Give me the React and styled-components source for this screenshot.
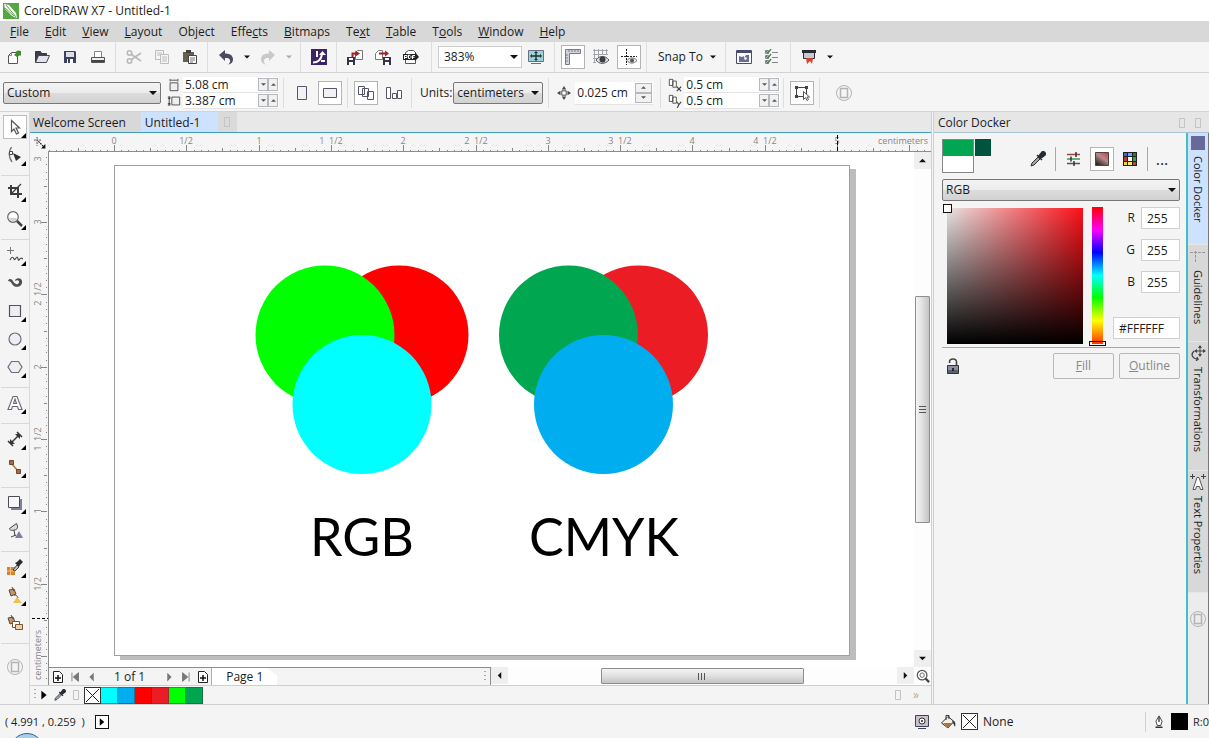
import React from 'react';
import styled, { createGlobalStyle, css } from 'styled-components';

/* icons, all on a 16px grid */

const icons = {
  newDoc: (
    <>
      <path d='M2.500 6.500l3-3h6v11h-9z' fill='#fff' stroke='#555' />
      <path d='M2.500 6.500h3v-3' fill='none' stroke='#888' />
      <path d='M8 6l3-3-1-1h5v5l-1-1-3 2z' fill='#3f8f2c' />
      <circle cx='12.500' cy='4' r='2.500' fill='#3f8f2c' />
    </>
  ),
  open: (
    <>
      <path d='M1.500 13.500v-11h5l1 2h5v3' fill='#3b3d4c' stroke='#333544' />
      <path d='M1.500 13.500l3-7h11l-3 7z' fill='#e3e4ea' stroke='#444657' />
    </>
  ),
  save: (
    <>
      <path d='M2 2h11l1 1v11H2z' fill='#3d3f61' />
      <path d='M4 3h8v5H4z' fill='#dcdde8' />
      <path d='M5 10h6v4H5z' fill='#fff' />
      <path d='M6 10h2v4H6z' fill='#3d3f61' />
    </>
  ),
  print: (
    <>
      <path d='M4.500 8.500v-6h7v6' fill='#fff' stroke='#888' />
      <path d='M1.500 8.500h13v5h-13z' fill='#eee' stroke='#555' />
      <path d='M2 11h12v2H2z' fill='#444' />
    </>
  ),
  cut: (
    <g fill='none' stroke='#b9b9b9' strokeWidth='1.600'>
      <circle cx='3.500' cy='4' r='2.200' />
      <circle cx='3.500' cy='12' r='2.200' />
      <path d='M5.500 5.500L15 12M5.500 10.500L15 4' />
    </g>
  ),
  copy: (
    <g fill='#f6f6f6' stroke='#bcbcbc'>
      <path d='M1.500 1.500h8v9h-8zM3 4h5M3 6h5' />
      <path d='M6.500 5.500h8v9h-8zM8 8h5M8 10h5M8 12h5' />
    </g>
  ),
  paste: (
    <>
      <path d='M1 3h11v10H1z' fill='#675f50' />
      <path d='M4 1h5v3H4z' fill='#45413a' />
      <path d='M6.500 6.500h8v8h-8z' fill='#fff' stroke='#454545' />
      <path d='M8 9h5M8 11h5M8 13h3' stroke='#777' />
    </>
  ),
  undo: <path d='M1 6l6-5v3.500c5 0 8 2 8 6 0 3-2 4.500-5 5 2-1.500 2.500-3 2-4.500-.5-1.600-2-2.200-5-2V12z' fill='#4b4a60' />,
  redo: <path d='M15 6L9 1v3.500c-5 0-8 2-8 6 0 3 2 4.500 5 5-2-1.500-2.500-3-2-4.500.5-1.600 2-2.200 5-2V12z' fill='#c9c9c9' />,
  connect: (
    <>
      <path d='M0 0h16v16H0z' fill='#3c2366' />
      <path d='M2 13.500c6 0 8-3 9-8' fill='none' stroke='#fff' strokeWidth='2' />
      <path d='M8 6l3.500-4L15 6zM5 2h2v6H5zM10 11h4v2h-4z' fill='#fff' />
    </>
  ),
  importFile: (
    <>
      <path d='M8.500 3.500l2-2h5v9h-7z' fill='#fff' stroke='#777' />
      <path d='M4.500 8V3.500h4V1.500L13 4.500l-4.500 3v-2H6.500V8z' fill='#a32126' />
      <path d='M0 8h8v8H0z' fill='#33344f' />
      <path d='M2 9h4v2H2zM2 13h4v3H2z' fill='#fff' />
    </>
  ),
  exportFile: (
    <>
      <path d='M.5 4.500l3-3h4v9h-7z' fill='#fff' stroke='#777' />
      <path d='M4 3.500h6V1.500l4 3-4 3V5.500H4z' fill='#a32126' />
      <path d='M8 8h8v8H8z' fill='#33344f' />
      <path d='M10 9h4v2h-4zM10 13h4v3h-4z' fill='#fff' />
    </>
  ),
  pdf: (
    <>
      <path d='M2.500 14.500v-11l3-2h5l2 2v11z' fill='#fff' stroke='#555' />
      <path d='M0 5h12V3l4 5-4 4v-1H0z' fill='#222' />
      <path d='M1.500 10V6.500H4v2H1.500M5.500 6v3.500H7L8 8.500v-1L7 6.500zM9.500 10V6.500H12M9.500 8.200h2' fill='none' stroke='#fff' />
    </>
  ),
  fullScreen: (
    <>
      <path d='M.5 1.500h15v11H.5z' fill='#9ed3d6' stroke='#6a6d86' />
      <path d='M3 14.500h10' stroke='#6a6d86' />
      <path d='M8 3v8M3 7h10' stroke='#17333a' strokeWidth='1.400' />
      <path d='M8 2l2 2H6zM8 12l-2-2h4zM2 7l2-2v4zM14 7l-2 2V5z' fill='#17333a' />
    </>
  ),
  rulers: (
    <>
      <path d='M.5 .5h15v4h-11v11h-4z' fill='#d3d4de' stroke='#777a8c' />
      <path d='M4 1v2M7 1v2M10 1v2M13 1v2M1 6h2M1 9h2M1 12h2' stroke='#777a8c' />
    </>
  ),
  grid: (
    <>
      <path d='M0 1.500h15M0 5.500h15M0 9.500h6M0 13.500h3M1.500 0v14M5.500 0v10M9.500 0v6M13.500 0v6' stroke='#a4a4ac' />
      <path d='M3 11c3-4.500 9-5 13 0-4 4.500-10 4.500-13 0z' fill='#dedede' stroke='#555' />
      <circle cx='9.500' cy='10.500' r='3' fill='#3b3b44' />
    </>
  ),
  guides: (
    <>
      <path d='M5.500 0v16M0 7.500h16' stroke='#222' strokeDasharray='2 1' />
      <path d='M6 11.500c2.500-3.500 7-3.500 10 0-3 3.500-7.500 3.500-10 0z' fill='#e8e8e8' stroke='#777' />
      <circle cx='11' cy='11.500' r='2' fill='#555' />
    </>
  ),
  launcher: (
    <>
      <path d='M.5 1.500h15v13H.5z' fill='#fff' stroke='#4a4b70' />
      <path d='M1 2h14v2H1z' fill='#4a4b70' />
      <path d='M3 13V7l3 1 2-1v2l2-3h3v7z' fill='#6a6b9a' />
      <circle cx='9.500' cy='9.500' r='1.300' fill='#fff' />
    </>
  ),
  options: (
    <g fill='none'>
      <path d='M1.500 1.500h3v3h-3zM1.500 6.500h3v3h-3zM1.500 11.500h3v3h-3z' stroke='#888' />
      <path d='M2 2l2 2 3-4M2 7l2 2 3-4M2 12l2 2 3-4' stroke='#52785a' strokeWidth='1.300' />
      <path d='M8 3.500h6M8 8.500h6M8 13.500h6' stroke='#888' />
    </g>
  ),
  welcome: (
    <>
      <path d='M2.500 1.500h11v8h-11z' fill='#c3cad6' stroke='#2a2b35' />
      <path d='M1 1h14v3H1z' fill='#2a2b35' />
      <path d='M5 9h7l-1 6-2-3-3 3z' fill='#d2422c' />
    </>
  ),
  pageWidth: (
    <>
      <path d='M3.500 5.500h9v9h-9z' fill='#eee' stroke='#444' />
      <path d='M3.500 1v3M12.500 1v3M4 2.500h8' stroke='#444' />
    </>
  ),
  pageHeight: (
    <>
      <path d='M5.500 3.500h9v9h-9z' fill='#eee' stroke='#444' />
      <path d='M2.500 3v10M1 3.500h3M1 12.500h3M1 5h3M1 11h3' stroke='#333' />
    </>
  ),
  portrait: <path d='M3.500 1.500h9v13h-9z' fill='#f2f2f4' stroke='#55566a' />,
  landscape: <path d='M1.500 3.500h13v9h-13z' fill='#f2f2f4' stroke='#55566a' />,
  allPages: <path d='M.5 1.500h6v8h-6zM4.500 3.500h6v8h-6zM9.500 6.500h6v8h-6z' fill='#fff' stroke='#55566a' />,
  currentPage: <path d='M.5 2.500h4v11h-4zM6.500 8.500h4v5h-4zM11.500 5.500h4v8h-4z' fill='#fff' stroke='#55566a' />,
  nudge: (
    <>
      <path d='M5.500 5.500h5v5h-5z' fill='#fff' stroke='#333' />
      <path d='M8 0l2.500 4h-5zM8 16l-2.500-4h5zM0 8l4-2.500v5zM16 8l-4 2.500v-5z' fill='#444' />
    </>
  ),
  dupX: (
    <g fill='none' stroke='#444'>
      <path d='M1.500 1.500h4v7h-4zM5.500 3.500h4v7h-4z' fill='#fff' />
      <path d='M10 10l5 5M15 10l-5 5' strokeWidth='1.300' />
    </g>
  ),
  dupY: (
    <g fill='none' stroke='#444'>
      <path d='M1.500 1.500h4v7h-4zM5.500 3.500h4v7h-4z' fill='#fff' />
      <path d='M10 9l2.500 3L15 9M12.500 12l-2 4' strokeWidth='1.300' />
    </g>
  ),
  treatAs: (
    <>
      <path d='M2.500 2.500h10v9h-10z' fill='none' stroke='#444' />
      <path d='M1 1h3v3H1zM11 1h3v3h-3zM1 10h3v3H1z' fill='#444' />
      <path d='M9.500 6.500v8l2-2 1.500 3 1.500-1-1.500-2.500h2.500z' fill='#fff' stroke='#555' />
    </>
  ),
  customize: (
    <g fill='none' stroke='#b3b3b3'>
      <circle cx='8' cy='8' r='7.500' />
      <path d='M4.500 3.500h7v9h-7z' strokeWidth='1.500' />
    </g>
  ),
  pick: <path d='M4.500 1.500v11l2.500-2.500 2.500 5 2-1-2.500-5h3.500z' fill='#fff' stroke='#555' strokeWidth='1.200' />,
  shape: (
    <>
      <path d='M4.500 0C1 5 2 11 5 15' fill='none' stroke='#777' strokeWidth='1.400' />
      <path d='M2.500 4.500h3v3h-3z' fill='#fff' stroke='#444' />
      <path d='M6 6l8 4-5 4z' fill='#2f2f33' />
    </>
  ),
  crop: (
    <g fill='none' stroke='#3c3c40' strokeWidth='2'>
      <path d='M4 2v9h11M1 5h10v10' />
      <path d='M5 10L14 1' strokeWidth='1.200' />
    </g>
  ),
  zoom: (
    <>
      <circle cx='6' cy='6' r='5.300' fill='#fff' stroke='#666' strokeWidth='1.200' />
      <path d='M2 7h8c-1 4-7 4-8 0z' fill='#cdd0d8' />
      <path d='M10 10l5 5' stroke='#444' strokeWidth='2.500' />
    </>
  ),
  freehand: (
    <g fill='none' stroke='#444'>
      <path d='M3.500 0v7M0 3.500h7' stroke='#777' />
      <path d='M3 13c2-4 3-3 4-1s2-2 3-2 1 4 2 3 2-3 4-1' strokeWidth='1.200' />
    </g>
  ),
  artistic: <path d='M1 6c1-3 4-2 5 0 2 4 6 4 6 1 0-2-2-2-4-1 0-3 6-4 7 0 1 6-7 8-10 3C4 7 3 6 1 6z' fill='#4e4e52' />,
  rect: <path d='M2.500 2.500h11v11h-11z' fill='#ededf3' stroke='#55565c' strokeWidth='1.200' />,
  ellipse: <circle cx='8' cy='8' r='6' fill='#ededf3' stroke='#6d6e75' strokeWidth='1.200' />,
  polygon: <path d='M4.500 2.500h7L15 8l-3.500 5.500h-7L1 8z' fill='#ededf3' stroke='#6d6e75' strokeWidth='1.200' />,
  text: <path d='M1 14.500L6 1.500h4l5 13h-3.500l-1-3h-5l-1 3zM6.500 8.500h3L8 4z' fill='#fff' fillRule='evenodd' stroke='#666973' strokeWidth='1.100' />,
  dimension: (
    <>
      <path d='M4 12l8-8' stroke='#333' strokeWidth='1.500' />
      <path d='M1 10l5 5M10 1l5 5' stroke='#333' strokeWidth='1.500' />
      <path d='M3 13V8l5 5zM13 3v5L8 3z' fill='#333' />
    </>
  ),
  connector: (
    <>
      <path d='M4 4l7 8' fill='none' stroke='#b07b36' strokeWidth='1.500' />
      <path d='M2.500 1.500h4v4h-4zM9.500 10.500h4v4h-4z' fill='#a56b48' stroke='#6d4632' />
    </>
  ),
  shadow: (
    <>
      <path d='M4 4h11v11H4z' fill='#7e80a0' />
      <path d='M1.500 1.500h11v11h-11z' fill='#f7f7fa' stroke='#4b4c58' />
    </>
  ),
  transparency: (
    <>
      <path d='M2.500 5.500l7-5c2 4 1 6-2 6.500S3.500 8 2.500 5.500zM7 7l1 6M4 14l5-2' fill='#ddd' stroke='#444' />
      <path d='M8 15l4-7 4 7z' fill='#7c7fa0' />
    </>
  ),
  colorDropper: (
    <>
      <path d='M0 8h8v8H0z' fill='#d9822b' />
      <path d='M3.500 8v8M0 12h8' stroke='#f4c27c' />
      <path d='M6 11l4-5 2 2-4 4z' fill='#bbb' stroke='#444' />
      <path d='M8 4l2-1 3-3 3 3-3 3-1 2z' fill='#2b2b30' />
    </>
  ),
  interactiveFill: (
    <>
      <path d='M2 3l5-1 2 5-5 2zM5 0l2 4' fill='#c79368' stroke='#5b4a3d' />
      <path d='M7 8c3 0 3 1 4 3' fill='none' stroke='#5b4a3d' />
      <path d='M6 16l4-6 5 6z' fill='#f0c14c' />
    </>
  ),
  smartFill: (
    <>
      <path d='M1 3l5-1 2 5-5 2zM4 0l2 4' fill='#c79368' stroke='#5b4a3d' />
      <path d='M5.500 6.500h7v6h-7z' fill='#fff' stroke='#7a5638' />
      <path d='M8.500 9.500h7v5h-7z' fill='#eed0a8' stroke='#7a5638' />
    </>
  ),
  dropper: (
    <>
      <path d='M1 15l1-3 6-6 2 2-6 6z' fill='#9ba3a8' stroke='#333' />
      <path d='M7 4l5 5M9 5l3-4c2-1 4 1 3 3l-4 3z' fill='#262c33' stroke='#262c33' strokeWidth='1.500' />
    </>
  ),
  sliders: (
    <g strokeWidth='1.500'>
      <path d='M1 3.500h13' stroke='#a54044' />
      <path d='M1 8h13' stroke='#3d9a55' />
      <path d='M1 12.500h13' stroke='#4c5570' />
      <path d='M10 1v5M5 5.500v5M8 10v5' stroke='#333' />
    </g>
  ),
  viewer: (
    <>
      <defs>
        <linearGradient id='viewer' x1='1' y1='0' x2='.3' y2='1'>
          <stop offset='0' stopColor='#d9343c' />
          <stop offset='.5' stopColor='#b98a8a' />
          <stop offset='1' stopColor='#2c2c2c' />
        </linearGradient>
      </defs>
      <path d='M1.500 1.500h13v13h-13z' fill='url(#viewer)' stroke='#4d4148' />
    </>
  ),
  palettes: (
    <>
      <path d='M1 1h14v14H1z' fill='#222' />
      <path d='M2 2h3v3H2z' fill='#4466c8' />
      <path d='M6 2h4v3H6z' fill='#73a0e8' />
      <path d='M11 2h3v3h-3z' fill='#2b7b35' />
      <path d='M2 6h3v4H2z' fill='#c03434' />
      <path d='M6 6h4v4H6z' fill='#fff' />
      <path d='M11 6h3v4h-3z' fill='#3aa23c' />
      <path d='M2 11h3v3H2z' fill='#eed640' />
      <path d='M6 11h4v3H6z' fill='#f4e873' />
      <path d='M11 11h3v3h-3z' fill='#b84432' />
    </>
  ),
  lock: (
    <>
      <path d='M4.500 5V4c0-4 7-4 7 0v4' fill='none' stroke='#444' strokeWidth='1.600' />
      <path d='M2.500 7.500h11v8h-11z' fill='#8b8da0' stroke='#333' />
      <path d='M3 12h10v3H3z' fill='#5d5f72' />
      <path d='M8 10v3' stroke='#111' strokeWidth='1.600' />
    </>
  ),
  origin: (
    <>
      <path d='M0 3.500h9M3.500 0v10' stroke='#333' strokeDasharray='2 1' />
      <path d='M5 5l6 6' stroke='#111' strokeDasharray='2 1' strokeWidth='1.300' />
      <path d='M13 8v5H8z' fill='#111' />
    </>
  ),
  addPage: (
    <>
      <path d='M3.500 2.500h6l3 3v8h-9z' fill='#fff' stroke='#222' />
      <path d='M8 6v6M5 9h6' stroke='#111' strokeWidth='1.500' />
    </>
  ),
  first: <path d='M4.500 3v10M12 3v10L6 8z' fill='#777' stroke='#777' />,
  prev: <path d='M10 3v10L5 8z' fill='#777' />,
  next: <path d='M6 3v10l5-5z' fill='#777' />,
  last: <path d='M11.500 3v10M4 3v10l6-5z' fill='#777' stroke='#777' />,
  play: <path d='M5 3v10l6-5z' fill='#000' />,
  blank: <path d='M5.500 3.500h5v9h-5z' fill='none' stroke='#c3c3c3' />,
  navigator: (
    <>
      <circle cx='7' cy='7' r='5.500' fill='#fff' stroke='#555' strokeWidth='1.400' />
      <circle cx='7' cy='7' r='2.500' fill='none' stroke='#555' />
      <path d='M11 11l4 4' stroke='#444' strokeWidth='2.500' />
    </>
  ),
  proof: (
    <>
      <path d='M1.500 1.500h13v11h-13z' fill='#c9c0c9' stroke='#3d4458' />
      <circle cx='8' cy='7' r='3' fill='#fff' stroke='#333' />
      <circle cx='8' cy='7' r='1' fill='#222' />
      <path d='M4 14.500h8' stroke='#3d4458' />
    </>
  ),
  bucket: (
    <>
      <path d='M1.500 9L8 2.500l6 5L8 14z' fill='#f3efe8' stroke='#333' />
      <path d='M3 9h10l-5 5z' fill='#b0703b' />
      <path d='M6 6V1.500h3V5' fill='none' stroke='#333' />
      <path d='M12 7c3 0 4 2 3 6l-2-4z' fill='#333' />
    </>
  ),
  nib: (
    <>
      <path d='M8 1l3.500 6-1.500 5H6L4.500 7z' fill='#fff' stroke='#333' />
      <path d='M8 2v6M4 14h8' stroke='#333' strokeWidth='1.500' />
    </>
  ),
  guideTab: <path d='M0 4.500h16M5.500 3v12' fill='none' stroke='#999' strokeDasharray='3 1' />,
  transform: (
    <>
      <path d='M10 1v10M5 6h10' stroke='#444' />
      <path d='M10 0l2 3H8zM10 12l-2-3h4zM4 6l3-2v4zM16 6l-3 2V4z' fill='#444' />
      <path d='M4 6c-4 4-1 8 4 8l-1-2M8 14l-2 2' fill='none' stroke='#444' strokeWidth='1.300' />
    </>
  ),
  textTab: (
    <>
      <path d='M3 15.500L7 3.500h2l4 12h-2.500l-1-3h-3l-1 3z' fill='#fff' stroke='#555' />
      <path d='M0 2.500h5M11 2.500h5M2.500 0v5M13.500 0v5' stroke='#444' />
    </>
  ),
};

const Icon = ({ name, size = 16 }) => (
  <svg width={size} height={size} viewBox='0 0 16 16' aria-hidden='true'>
    {icons[name]}
  </svg>
);

const Caret = ({ dir = 'down', color = '#111', size = 7 }) => {
  const d = {
    down: 'M0 2h8L4 6z',
    up: 'M0 6h8L4 2z',
    left: 'M6 0v8L2 4z',
    right: 'M2 0v8l4-4z',
  }[dir];
  return (
    <svg width={size} height={size} viewBox='0 0 8 8' aria-hidden='true'>
      <path d={d} fill={color} />
    </svg>
  );
};

const menus = [
  ['', 'F', 'ile'],
  ['', 'E', 'dit'],
  ['', 'V', 'iew'],
  ['', 'L', 'ayout'],
  ['Ob', 'j', 'ect'],
  ['Effe', 'c', 'ts'],
  ['', 'B', 'itmaps'],
  ['Te', 'x', 't'],
  ['', 'T', 'able'],
  ['T', 'o', 'ols'],
  ['', 'W', 'indow'],
  ['', 'H', 'elp'],
];

const tools = [
  ['pick', 'shape'],
  ['crop', 'zoom'],
  ['freehand', 'artistic', 'rect', 'ellipse', 'polygon'],
  ['text'],
  ['dimension', 'connector'],
  ['shadow', 'transparency'],
  ['colorDropper', 'interactiveFill', 'smartFill'],
];

const noFlyout = ['artistic', 'transparency', 'smartFill'];

const palette = ['#00ffff', '#00adef', '#ff0000', '#ec1c24', '#00ff00', '#00a64f'];

const dockers = [
  { label: 'Color Docker', height: 112, active: true },
  { label: 'Guidelines', height: 97, icon: 'guideTab' },
  { label: 'Transformations', height: 129, icon: 'transform' },
  { label: 'Text Properties', height: 122, icon: 'textTab' },
];

// length of one ruler unit at the current zoom level
const UNIT = 144.6;

const ticks = (from, to) => {
  const list = [];
  for (let i = from; i <= to; i++) {
    list.push({ at: Math.round((i * UNIT) / 20), size: i % 10 === 0 ? 6 : i % 5 === 0 ? 3 : 1 });
  }
  return list;
};

const halves = [0, 0.5, 1, 1.5, 2, 2.5, 3, 3.5, 4, 4.5, 5];

const rulerLabel = (n) => {
  const whole = Math.floor(n);
  if (n === whole) return String(n);
  return whole ? `${whole}\u00a0\u00a01/2` : '1/2';
};

function HorizontalRuler() {
  const zero = 66;
  return (
    <RulerSvg>
      {ticks(-9, 260).map((t) => (
        <rect key={t.at} x={zero + t.at} y={17 - t.size} width='1' height={t.size} />
      ))}
      {halves.map((n) => (
        <text key={n} x={zero + Math.round(n * UNIT)} y='10' textAnchor='middle'>
          {rulerLabel(n)}
        </text>
      ))}
      <text x='100%' dx='-3' y='10' textAnchor='end'>
        centimeters
      </text>
      <path d='M789.500 1v16' stroke='#000' strokeDasharray='4 2' />
    </RulerSvg>
  );
}

function VerticalRuler() {
  const zero = 505;
  return (
    <RulerSvg>
      {ticks(-3, 69).map((t) => (
        <rect key={t.at} x={17 - t.size} y={zero - t.at} width={t.size} height='1' />
      ))}
      {halves.slice(1, 7).map((n) => (
        <text key={n} transform={`translate(11 ${zero - Math.round(n * UNIT)}) rotate(-90)`} textAnchor='middle'>
          {rulerLabel(n)}
        </text>
      ))}
      <text transform='translate(11 8) rotate(-90)' textAnchor='middle'>
        3
      </text>
      <text transform='translate(11 504) rotate(-90)' textAnchor='middle'>
        centimeters
      </text>
      <path d='M2 467.500h16' stroke='#000' strokeDasharray='3 2' />
    </RulerSvg>
  );
}

const Dropdown = ({ label, options, plain, width, grow }) => (
  <SelectWrap $width={width} $grow={grow}>
    <Select aria-label={label} $plain={plain}>
      {options.map((o) => (
        <option key={o}>{o}</option>
      ))}
    </Select>
    <Caret size={8} />
  </SelectWrap>
);

const PairField = ({ icon, label, value }) => (
  <FieldRow>
    <Icon name={icon} size={14} />
    <FieldBox>
      <NumberInput aria-label={label} defaultValue={value} />
      <SpinButton aria-label={`Decrease ${label}`}>
        <Caret size={5} color='#555' />
      </SpinButton>
      <SpinButton aria-label={`Increase ${label}`}>
        <Caret dir='up' size={5} color='#555' />
      </SpinButton>
    </FieldBox>
  </FieldRow>
);

const Tool = ({ name, label, active, size }) => (
  <IconButton aria-label={label || name} $active={active}>
    <Icon name={name} size={size} />
  </IconButton>
);

function StandardBar() {
  return (
    <Toolbar $height={31}>
      <Tool name='newDoc' />
      <Tool name='open' />
      <Tool name='save' />
      <Tool name='print' />
      <Divider />
      <Tool name='cut' />
      <Tool name='copy' />
      <Tool name='paste' />
      <Divider />
      <Tool name='undo' />
      <CaretButton aria-label='Undo history'>
        <Caret size={6} />
      </CaretButton>
      <Tool name='redo' />
      <CaretButton aria-label='Redo history'>
        <Caret size={6} color='#aaa' />
      </CaretButton>
      <Divider $gap={4} />
      <Tool name='connect' />
      <Divider />
      <Tool name='importFile' />
      <Tool name='exportFile' />
      <Tool name='pdf' />
      <Divider $gap={6} />
      <Dropdown label='Zoom levels' options={['383%', '100%', '200%']} plain width={84} />
      <Tool name='fullScreen' />
      <Divider $gap={4} />
      <Tool name='rulers' active />
      <Tool name='grid' />
      <Tool name='guides' active />
      <Divider />
      <TextButton>
        Snap To <Caret size={6} />
      </TextButton>
      <Divider $gap={4} />
      <Tool name='launcher' />
      <Tool name='options' />
      <Divider $gap={4} />
      <Tool name='welcome' />
      <CaretButton aria-label='Welcome options'>
        <Caret size={6} />
      </CaretButton>
    </Toolbar>
  );
}

function PropertyBar() {
  return (
    <Toolbar $height={39} $inset>
      <Dropdown label='Page size' options={['Custom', 'Letter', 'A4']} width={158} />
      <FieldStack>
        <PairField icon='pageWidth' label='page width' value='5.08 cm' />
        <PairField icon='pageHeight' label='page height' value='3.387 cm' />
      </FieldStack>
      <Divider $gap={4} />
      <Tool name='portrait' />
      <Tool name='landscape' active />
      <Divider />
      <Tool name='allPages' active />
      <Tool name='currentPage' />
      <Divider />
      <Units>
        Units:
        <Dropdown label='Units' options={['centimeters', 'inches', 'pixels']} width={90} />
      </Units>
      <Divider />
      <Nudge>
        <Icon name='nudge' size={14} />
        <FieldBox>
          <NumberInput aria-label='Nudge distance' defaultValue='0.025 cm' $tall />
          <SpinColumn>
            <SpinButton aria-label='Increase nudge' $wide>
              <Caret dir='up' size={5} color='#555' />
            </SpinButton>
            <SpinButton aria-label='Decrease nudge' $wide>
              <Caret size={5} color='#555' />
            </SpinButton>
          </SpinColumn>
        </FieldBox>
      </Nudge>
      <Divider />
      <FieldStack $tight>
        <PairField icon='dupX' label='duplicate x' value='0.5 cm' />
        <PairField icon='dupY' label='duplicate y' value='0.5 cm' />
      </FieldStack>
      <Divider />
      <Tool name='treatAs' active />
      <Divider />
      <Spacer />
      <Tool name='customize' />
    </Toolbar>
  );
}

function Artwork() {
  return (
    <Page>
      <Figure>
        <svg width='214' height='210' viewBox='0 0 214 210'>
          <circle cx='144' cy='70' r='69.500' fill='#ff0000' />
          <circle cx='70' cy='70' r='69.500' fill='#00ff00' />
          <circle cx='107' cy='139.500' r='69.500' fill='#00ffff' />
        </svg>
        <figcaption>RGB</figcaption>
      </Figure>
      <Figure>
        <svg width='210' height='210' viewBox='0 0 210 210'>
          <circle cx='139.500' cy='70' r='69.500' fill='#ec1c24' />
          <circle cx='69.500' cy='70' r='69.500' fill='#00a650' />
          <circle cx='104.500' cy='139.500' r='69.500' fill='#00adef' />
        </svg>
        <figcaption>CMYK</figcaption>
      </Figure>
    </Page>
  );
}

function Workspace() {
  return (
    <Work>
      <DocTabs>
        <DocTab>Welcome Screen</DocTab>
        <DocTab $active>Untitled-1</DocTab>
        <NewTab aria-label='New document'>
          <Icon name='blank' />
        </NewTab>
      </DocTabs>
      <RulerRow>
        <Origin>
          <Icon name='origin' size={14} />
        </Origin>
        <HorizontalRuler />
      </RulerRow>
      <Middle>
        <SideRuler>
          <VerticalRuler />
        </SideRuler>
        <View>
          <CanvasRow>
            <Canvas>
              <Artwork />
            </Canvas>
            <ScrollBar $vertical>
              <ScrollArrow aria-label='Scroll up'>
                <Caret dir='up' />
              </ScrollArrow>
              <Track $vertical>
                <Thumb $vertical>
                  <Grip $vertical />
                </Thumb>
              </Track>
              <ScrollArrow aria-label='Scroll down'>
                <Caret />
              </ScrollArrow>
            </ScrollBar>
          </CanvasRow>
          <NavRow>
            <PageNav>
              <NavButton aria-label='Add page before'>
                <Icon name='addPage' />
              </NavButton>
              <NavButton aria-label='First page'>
                <Icon name='first' size={14} />
              </NavButton>
              <NavButton aria-label='Previous page'>
                <Icon name='prev' size={14} />
              </NavButton>
              <PageCount>1 of 1</PageCount>
              <NavButton aria-label='Next page'>
                <Icon name='next' size={14} />
              </NavButton>
              <NavButton aria-label='Last page'>
                <Icon name='last' size={14} />
              </NavButton>
              <NavButton aria-label='Add page after'>
                <Icon name='addPage' />
              </NavButton>
              <PageTab>Page 1</PageTab>
              <Handle />
            </PageNav>
            <ScrollBar>
              <ScrollArrow aria-label='Scroll left'>
                <Caret dir='left' />
              </ScrollArrow>
              <Track>
                <Thumb>
                  <Grip />
                </Thumb>
              </Track>
              <ScrollArrow aria-label='Scroll right'>
                <Caret dir='right' />
              </ScrollArrow>
            </ScrollBar>
            <NavButton aria-label='Navigator'>
              <Icon name='navigator' size={14} />
            </NavButton>
          </NavRow>
        </View>
      </Middle>
      <PaletteRow>
        <Handle />
        <NavButton aria-label='Palette menu'>
          <Icon name='play' size={14} />
        </NavButton>
        <NavButton aria-label='Pick color'>
          <Icon name='dropper' size={12} />
        </NavButton>
        <NavButton aria-label='Scroll palette'>
          <Icon name='blank' />
        </NavButton>
        <NoColor aria-label='No color'>
          <CrossIcon />
        </NoColor>
        {palette.map((c) => (
          <Swatch key={c} aria-label={c} $color={c} />
        ))}
        <Spacer />
        <NavButton aria-label='More colors'>
          <Icon name='blank' />
        </NavButton>
        <More aria-label='Expand palette'>»</More>
      </PaletteRow>
    </Work>
  );
}

const CrossIcon = () => (
  <svg width='15' height='15' viewBox='0 0 15 15' aria-hidden='true'>
    <path d='M1 1l13 13M14 1L1 14' stroke='#222' />
  </svg>
);

function ColorDocker() {
  return (
    <Docker>
      <DockerHeader>
        Color Docker
        <Spacer />
        <Icon name='blank' />
        <Icon name='blank' />
      </DockerHeader>
      <DockerMain>
        <DockerBody>
          <DockerTools>
            <Reference>
              <i />
              <b />
            </Reference>
            <Complement />
            <Spacer />
            <Tool name='dropper' label='Color eyedropper' />
            <Divider $tall />
            <Tool name='sliders' label='Color sliders' />
            <Tool name='viewer' label='Color viewers' active />
            <Tool name='palettes' label='Color palettes' />
            <Divider $tall />
            <More $dark aria-label='More options'>
              ...
            </More>
          </DockerTools>
          <Dropdown label='Color model' options={['RGB', 'CMYK', 'Lab']} grow />
          <Picker>
            <ColorField>
              <Marker />
            </ColorField>
            <Hue>
              <HueMarker />
            </Hue>
            <Values>
              {['R', 'G', 'B'].map((c) => (
                <label key={c}>
                  {c}
                  <ValueInput defaultValue='255' />
                </label>
              ))}
              <ValueInput aria-label='Hex value' defaultValue='#FFFFFF' $hex />
            </Values>
          </Picker>
          <Actions>
            <Icon name='lock' />
            <Spacer />
            <ActionButton disabled>
              <u>F</u>ill
            </ActionButton>
            <ActionButton disabled>
              <u>O</u>utline
            </ActionButton>
          </Actions>
        </DockerBody>
        <SideTabs>
          {dockers.map((d) => (
            <SideTab key={d.label} $height={d.height} $active={d.active}>
              {d.icon ? <Icon name={d.icon} /> : <ColorChip />}
              <span>{d.label}</span>
            </SideTab>
          ))}
          <SideTabEnd aria-label='Customize dockers'>
            <Icon name='customize' />
          </SideTabEnd>
        </SideTabs>
      </DockerMain>
    </Docker>
  );
}

function App() {
  return (
    <Shell>
      <GlobalStyle />
      <TitleBar>
        <svg width='16' height='16' viewBox='0 0 16 16' aria-hidden='true'>
          <path d='M0 0h16v16H0z' fill='#57a641' />
          <path d='M1 1l5 1 7 8 1 5-5-2-7-7z' fill='#fff' />
          <path d='M3 2l10 12M2 5l9 8' stroke='#57a641' />
        </svg>
        CorelDRAW X7 - Untitled-1
      </TitleBar>
      <MenuBar>
        {menus.map(([before, key, after]) => (
          <MenuItem key={before + key + after}>
            {before}
            <u>{key}</u>
            {after}
          </MenuItem>
        ))}
      </MenuBar>
      <StandardBar />
      <PropertyBar />
      <Body>
        <Toolbox>
          {tools.map((group) => (
            <ToolGroup key={group[0]}>
              {group.map((name) => (
                <ToolButton key={name} aria-label={name} $active={name === 'pick'}>
                  <Icon name={name} />
                  {!noFlyout.includes(name) && <Flyout />}
                </ToolButton>
              ))}
            </ToolGroup>
          ))}
          <ToolGroup $last>
            <ToolButton aria-label='Customize toolbox'>
              <Icon name='customize' />
            </ToolButton>
          </ToolGroup>
        </Toolbox>
        <Workspace />
        <ColorDocker />
      </Body>
      <StatusBar>
        <Coords>( 4.991 , 0.259&nbsp; )</Coords>
        <BoxedButton aria-label='Status options'>
          <Icon name='play' size={12} />
        </BoxedButton>
        <Orb />
        <Spacer />
        <Icon name='proof' />
        <StatusGroup>
          <Icon name='bucket' />
          <NoColor as='span'>
            <CrossIcon />
          </NoColor>
          None
        </StatusGroup>
        <OutlineStatus>
          <Icon name='nib' size={14} />
          <BlackChip />
          R:0
        </OutlineStatus>
      </StatusBar>
    </Shell>
  );
}

export default App;

const GlobalStyle = createGlobalStyle`
  * {
    box-sizing: border-box;
  }

  body {
    margin: 0;
    font-family: 'Open Sans', 'Noto Sans', sans-serif;
    font-size: 12px;
    line-height: 16px;
    color: #1c1c1c;
    background: #f4f4f4;
  }

  button,
  input,
  select {
    font: inherit;
    color: inherit;
    margin: 0;
    padding: 0;
    border: none;
    border-radius: 0;
    background: none;
  }

  svg {
    display: block;
    flex: none;
  }
`;

const Shell = styled.div`
  display: flex;
  flex-direction: column;
  height: 100vh;
  overflow: hidden;
  white-space: nowrap;
`;

const TitleBar = styled.header`
  display: flex;
  align-items: center;
  gap: 5px;
  height: 21px;
  flex: none;
  padding-left: 3px;
  background: #fff;
`;

const MenuBar = styled.nav`
  display: flex;
  align-items: center;
  height: 21px;
  flex: none;
  padding-left: 2px;
  background: #d8d8d8;
`;

const MenuItem = styled.button`
  padding: 0 8px;
`;

const Toolbar = styled.div`
  display: flex;
  align-items: center;
  height: ${({ $height }) => $height}px;
  flex: none;
  padding: ${({ $inset }) => ($inset ? '2px 0 0 3px' : '0')};
  border-bottom: 1px solid #d3d3d3;
  background: #f5f5f5;
`;

const Divider = styled.span`
  width: 1px;
  height: ${({ $tall }) => ($tall ? 24 : 30)}px;
  margin: 0 ${({ $gap }) => $gap || 4}px 0 ${({ $gap }) => $gap || 3}px;
  background: ${({ $tall }) => ($tall ? '#a8a8a8' : '#dedede')};
`;

const Spacer = styled.span`
  flex: 0 1 10px;

  ${Toolbar} & {
    flex: 0 0 6px;
  }
`;

const IconButton = styled.button`
  display: flex;
  align-items: center;
  justify-content: center;
  width: ${({ $active }) => ($active ? 24 : 28)}px;
  height: 24px;
  margin: 0 ${({ $active }) => ($active ? 2 : 0)}px;
  ${({ $active }) =>
    $active &&
    css`
      border: 1px solid #b4b4b4;
      background: #fff;
    `}
`;

const CaretButton = styled.button`
  display: flex;
  align-items: center;
  justify-content: center;
  width: 14px;
  height: 24px;
`;

const TextButton = styled.button`
  display: flex;
  align-items: center;
  gap: 7px;
  padding: 0 5px 0 7px;
`;

const SelectWrap = styled.span`
  display: grid;
  align-items: center;
  width: ${({ $grow, $width }) => ($grow ? '100%' : `${$width}px`)};

  > * {
    grid-area: 1 / 1;
  }

  svg {
    justify-self: end;
    margin-right: 4px;
    pointer-events: none;
  }
`;

const Select = styled.select`
  appearance: none;
  height: 22px;
  padding: 0 16px 0 3px;
  border: 1px solid #777;
  border-radius: 2px;
  background: linear-gradient(#f3f3f3, #ebebeb 50%, #dcdcdc 50%, #d2d2d2);
  ${({ $plain }) =>
    $plain &&
    css`
      padding-left: 5px;
      border-color: #ccc;
      border-radius: 0;
      background: #fff;
    `}
`;

const FieldStack = styled.div`
  display: flex;
  flex-direction: column;
  width: ${({ $tight }) => ($tight ? 115 : 118)}px;
  padding-left: ${({ $tight }) => ($tight ? 3 : 6)}px;
`;

const FieldRow = styled.div`
  display: flex;
  align-items: center;
  gap: 2px;
  height: 16px;
`;

const FieldBox = styled.span`
  display: flex;
  align-items: center;
  flex: 1;
  min-width: 0;
  padding-right: 1px;
  border-bottom: 1px solid #e4e4e4;
  background: #fff;
`;

const NumberInput = styled.input`
  flex: 1;
  min-width: 0;
  height: ${({ $tall }) => ($tall ? 22 : 15)}px;
  padding-left: 2px;
`;

const SpinButton = styled.button`
  display: flex;
  align-items: center;
  justify-content: center;
  width: ${({ $wide }) => ($wide ? 17 : 10)}px;
  height: ${({ $wide }) => ($wide ? 10 : 13)}px;
  border: 1px solid #b5b9bf;
  background: #f1f1f1;
`;

const SpinColumn = styled.span`
  display: flex;
  flex-direction: column;
`;

const Nudge = styled.div`
  display: flex;
  align-items: center;
  gap: 4px;
  width: 104px;
  padding: 0 4px;
`;

const Units = styled.div`
  display: flex;
  align-items: center;
  gap: 1px;
  padding: 0 2px 0 4px;
`;

const Body = styled.main`
  display: flex;
  flex: 1;
  min-height: 0;
`;

const Toolbox = styled.aside`
  width: 30px;
  padding: 1px 0 0 1px;
  border-right: 1px solid #d9d9d9;
  background: #f4f4f4;
`;

const ToolGroup = styled.div`
  padding: 0 0 4px;
  margin-bottom: 3px;
  border-bottom: ${({ $last }) => ($last ? 0 : 1)}px solid #d8d8d8;
  padding-top: ${({ $last }) => ($last ? 6 : 0)}px;
`;

const ToolButton = styled.button`
  position: relative;
  display: flex;
  align-items: center;
  justify-content: center;
  width: 24px;
  height: 24px;
  margin: 2px 2px 4px;
  ${({ $active }) =>
    $active &&
    css`
      outline: 1px solid #bdbdbd;
      outline-offset: -1px;
      background: #fff;
    `}
`;

const Flyout = styled.span`
  position: absolute;
  right: 1px;
  bottom: 1px;
  border-left: 5px solid transparent;
  border-bottom: 5px solid #000;
`;

const Work = styled.section`
  display: flex;
  flex-direction: column;
  flex: 1;
  min-width: 0;
`;

const DocTabs = styled.div`
  display: flex;
  height: 21px;
  flex: none;
  border-bottom: 1px solid #3f9dbd;
  background: #e8e8e8;
`;

const DocTab = styled.button`
  padding: ${({ $active }) => ($active ? '1px 18px 0 4px' : '1px 15px 0 3px')};
  background: ${({ $active }) => ($active ? '#cce2ff' : '#d8d8d8')};
`;

const NewTab = styled.button`
  width: 19px;
  padding-left: 1px;
  background: #dadada;
`;

const RulerRow = styled.div`
  display: flex;
  height: 18px;
  flex: none;
  border-top: 1px solid #def7fa;
  background: #f5f5f5;
`;

const Origin = styled.span`
  width: 18px;
  padding: 3px 0 0 4px;
`;

const RulerSvg = styled.svg`
  flex: 1;
  width: 100%;
  height: 100%;
  min-width: 0;
  overflow: hidden;
  font-size: 9px;
  fill: #858585;
`;

const Middle = styled.div`
  display: flex;
  flex: 1;
  min-height: 0;
`;

const SideRuler = styled.div`
  display: flex;
  width: 18px;
  background: #f5f5f5;
`;

const View = styled.div`
  display: flex;
  flex-direction: column;
  flex: 1;
  min-width: 0;
`;

const CanvasRow = styled.div`
  display: flex;
  flex: 1;
  min-height: 0;
  border-top: 1px solid #8c8c8c;
  border-left: 1px solid #8c8c8c;
  background: #fff;
`;

const Canvas = styled.div`
  display: flex;
  flex: 1;
  min-width: 0;
  padding: 13px 64px 11px 65px;
`;

const Page = styled.div`
  display: flex;
  justify-content: center;
  gap: 30px;
  flex: 1;
  padding-top: 99px;
  border: 1px solid #a0a0a0;
  background: #fff;
  box-shadow: 6px 4px 0 #bdbdbd;
`;

const Figure = styled.figure`
  display: flex;
  flex-direction: column;
  align-items: center;
  gap: 24px;
  margin: 0;

  figcaption {
    font-family: Lato, 'Open Sans', sans-serif;
    font-size: 52px;
    line-height: 74px;
    color: #000;
  }
`;

const ScrollBar = styled.div`
  display: flex;
  flex-direction: ${({ $vertical }) => ($vertical ? 'column' : 'row')};
  flex: ${({ $vertical }) => ($vertical ? 'none' : '1')};
  width: ${({ $vertical }) => ($vertical ? '17px' : 'auto')};
  background: #fdfdfd;
`;

const ScrollArrow = styled.button`
  display: flex;
  align-items: center;
  justify-content: center;
  width: 17px;
  height: 17px;
  background: #efefef;
`;

const Track = styled.div`
  display: flex;
  flex-direction: ${({ $vertical }) => ($vertical ? 'column' : 'row')};
  justify-content: center;
  flex: 1;
  padding: ${({ $vertical }) => ($vertical ? '0 1px' : '1px 0')};
`;

const Thumb = styled.div`
  display: flex;
  align-items: center;
  justify-content: center;
  flex: 0 0 ${({ $vertical }) => ($vertical ? '47%' : '52%')};
  border: 1px solid #8e8e8e;
  border-radius: 1px;
  background: linear-gradient(
    ${({ $vertical }) => ($vertical ? 'to right' : 'to bottom')},
    #f3f3f3,
    #e2e2e2 45%,
    #c4c4c4
  );
`;

const Grip = styled.span`
  width: ${({ $vertical }) => ($vertical ? 7 : 8)}px;
  height: ${({ $vertical }) => ($vertical ? 8 : 7)}px;
  background: repeating-linear-gradient(
    ${({ $vertical }) => ($vertical ? 'to bottom' : 'to right')},
    #555 0 1px,
    transparent 1px 3px
  );
`;

const NavRow = styled.div`
  display: flex;
  height: 18px;
  flex: none;
  background: #fdfdfd;
`;

const PageNav = styled.div`
  display: flex;
  align-items: center;
  flex: 0 0 443px;
  border: solid #8c8c8c;
  border-width: 1px 1px 0;
  background: #f4f4f4;
`;

const NavButton = styled.button`
  display: flex;
  align-items: center;
  justify-content: center;
  width: 17px;
  height: 17px;
`;

const PageCount = styled.span`
  padding: 0 15px 0 14px;
`;

const PageTab = styled.button`
  height: 17px;
  margin-right: auto;
  padding: 0 14px;
  border-left: 1px solid #999;
  background: #fff;
  clip-path: polygon(0 0, 56px 0, 100% 8px, 100% 100%, 0 100%);
`;

const Handle = styled.span`
  width: 2px;
  height: 12px;
  margin: 0 4px;
  background: repeating-linear-gradient(#aaa 0 1px, transparent 1px 4px);
`;

const PaletteRow = styled.div`
  display: flex;
  align-items: center;
  height: 19px;
  flex: none;
  border-top: 1px solid #cfcfcf;
  background: #f4f4f4;

  ${Spacer} {
    flex: 1;
  }

  ${Handle} {
    margin-right: 0;
  }

  ${NavButton} {
    width: 16px;
  }
`;

const NoColor = styled.button`
  display: flex;
  align-items: center;
  justify-content: center;
  width: 17px;
  height: 17px;
  border: 1px solid #333;
  background: #fff;
`;

const Swatch = styled.button`
  width: 17px;
  height: 17px;
  border: 1px solid rgba(60, 60, 60, 0.5);
  border-left-width: 0;
  background: ${({ $color }) => $color};
`;

const More = styled.button`
  width: 20px;
  margin-right: ${({ $dark }) => ($dark ? 8 : 5)}px;
  color: ${({ $dark }) => ($dark ? '#222' : '#aaa')};
  font-size: ${({ $dark }) => ($dark ? 16 : 12)}px;
`;

const Docker = styled.aside`
  display: flex;
  flex-direction: column;
  width: 278px;
  flex: none;
  border-left: 3px double #d0d0d0;
`;

const DockerHeader = styled.div`
  display: flex;
  align-items: center;
  height: 21px;
  flex: none;
  padding: 1px 3px 0 4px;
  border-bottom: 1px solid #a5c5d2;
  background: #e6e6e6;

  ${Spacer} {
    flex: 1;
  }
`;

const DockerMain = styled.div`
  display: flex;
  flex: 1;
  min-height: 0;
`;

const DockerBody = styled.div`
  flex: 1;
  min-width: 0;
  padding: 6px 6px 0 8px;
  border-right: 2px solid #45bcc6;
  background: #f4f4f4;
`;

const DockerTools = styled.div`
  display: flex;
  align-items: center;
  height: 40px;

  ${Spacer} {
    flex: 1;
  }
`;

const Reference = styled.div`
  align-self: flex-start;
  display: flex;
  flex-direction: column;
  width: 32px;
  height: 34px;
  border: 1px solid #888;

  i,
  b {
    flex: 1;
    background: #00a651;
  }

  b {
    background: #fff;
  }
`;

const Complement = styled.span`
  align-self: flex-start;
  width: 16px;
  height: 17px;
  margin-left: 1px;
  background: #00533f;
`;

const Picker = styled.div`
  display: flex;
  padding: 6px 0 3px 5px;
  border-bottom: 1px solid #a8a8a8;
`;

const ColorField = styled.div`
  position: relative;
  width: 136px;
  height: 136px;
  margin-top: 1px;
  background: linear-gradient(to top, #000, transparent), linear-gradient(to right, #e8e4e4, #fb1018);
`;

const Marker = styled.span`
  position: absolute;
  left: -4px;
  top: -4px;
  width: 9px;
  height: 9px;
  border: 1px solid #111;
  background: #fff;
`;

const Hue = styled.div`
  position: relative;
  width: 11px;
  margin-left: 9px;
  background: linear-gradient(#f00, #f0f 17%, #00f 33%, #0ff 50%, #0f0 66%, #ff0 83%, #f30);
`;

const HueMarker = styled.span`
  position: absolute;
  left: -3px;
  bottom: -2px;
  width: 17px;
  height: 5px;
  border: 1px solid #111;
`;

const Values = styled.div`
  display: flex;
  flex-direction: column;
  align-items: flex-end;
  gap: 10px;
  flex: 1;

  label {
    display: flex;
    align-items: center;
    gap: 6px;
  }
`;

const ValueInput = styled.input`
  width: ${({ $hex }) => ($hex ? 67 : 39)}px;
  height: 22px;
  margin-top: ${({ $hex }) => ($hex ? 14 : 0)}px;
  padding-left: 5px;
  border: 1px solid #d0d0d0;
  background: #fff;
`;

const Actions = styled.div`
  display: flex;
  align-items: center;
  gap: 5px;
  padding: 5px 0 0 3px;

  ${Spacer} {
    flex: 1;
  }
`;

const ActionButton = styled.button`
  width: 61px;
  height: 26px;
  border: 1px solid #b8b8b8;
  border-radius: 2px;
  color: #888;
`;

const SideTabs = styled.div`
  display: flex;
  flex-direction: column;
  width: 21px;
  border-right: 1px solid #777;
  background: #ececec;
`;

const SideTab = styled.button`
  display: flex;
  align-items: center;
  gap: 6px;
  flex-direction: column;
  height: ${({ $height }) => $height}px;
  padding-top: 3px;
  border-bottom: 1px solid #e6e6e6;
  background: ${({ $active }) => ($active ? '#cce2ff' : '#d8d8d8')};

  span {
    writing-mode: vertical-rl;
    font-size: 11px;
  }
`;

const ColorChip = styled.i`
  width: 14px;
  height: 14px;
  background: #68699a;
`;

const SideTabEnd = styled.button`
  display: flex;
  justify-content: center;
  padding-top: 18px;
`;

const StatusBar = styled.footer`
  position: relative;
  display: flex;
  align-items: center;
  gap: 10px;
  height: 34px;
  flex: none;
  padding-left: 5px;
  border-top: 1px solid #cfcfcf;
  background: #f4f4f4;
  overflow: hidden;

  ${Spacer} {
    flex: 1;
  }
`;

const Coords = styled.span`
  font-size: 11px;
`;

const BoxedButton = styled.button`
  display: flex;
  align-items: center;
  justify-content: center;
  width: 14px;
  height: 14px;
  border: 1px solid #111;
  background: #fff;
`;

// start button of the desktop, peeking over the bottom edge
const Orb = styled.span`
  position: absolute;
  left: 10px;
  top: 28px;
  width: 34px;
  height: 34px;
  border: 1px solid #35678e;
  border-radius: 50%;
  background: #a9cfe6;
`;

const StatusGroup = styled.div`
  display: flex;
  align-items: center;
  gap: 5px;
  width: 195px;
`;

const OutlineStatus = styled.div`
  display: flex;
  align-items: center;
  gap: 5px;
  height: 20px;
  padding-left: 6px;
  border-left: 1px solid #d0d0d0;
  font-size: 11px;
`;

const BlackChip = styled.span`
  width: 17px;
  height: 17px;
  background: #000;
`;
